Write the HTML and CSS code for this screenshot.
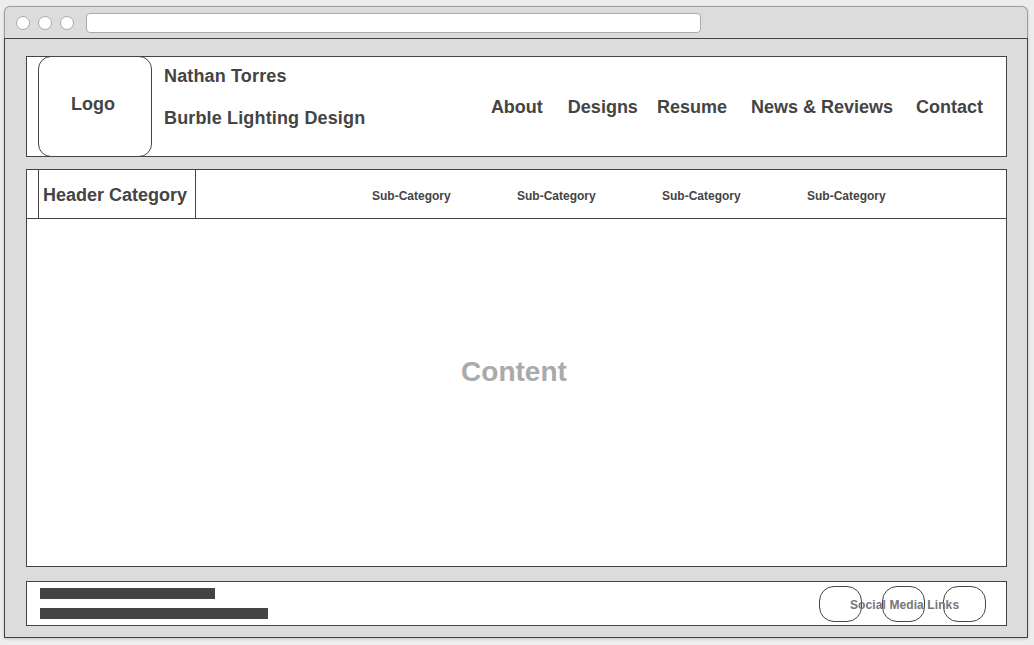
FILE: index.html
```html
<!DOCTYPE html>
<html lang="en">
<head>
<meta charset="utf-8">
<title>Wireframe</title>
<link rel="stylesheet" href="styles.css">
</head>
<body>
<div class="window">
  <div class="titlebar">
    <span class="dot"></span>
    <span class="dot"></span>
    <span class="dot"></span>
    <span class="urlbar"></span>
  </div>
  <div class="viewport">
    <header class="site-header">
      <div class="logo">Logo</div>
      <div class="brand">
        <div class="brand-line">Nathan Torres</div>
        <div class="brand-line">Burble Lighting Design</div>
      </div>
      <nav class="nav">
        <a class="nav-item">About</a>
        <a class="nav-item nav-designs">Designs</a>
        <a class="nav-item nav-resume">Resume</a>
        <a class="nav-item nav-news">News &amp; Reviews</a>
        <a class="nav-item nav-contact">Contact</a>
      </nav>
    </header>
    <section class="main">
      <div class="catbar">
        <div class="stub"></div>
        <div class="header-cat">Header Category</div>
        <div class="subcats">
          <span class="subcat">Sub-Category</span>
          <span class="subcat">Sub-Category</span>
          <span class="subcat">Sub-Category</span>
          <span class="subcat">Sub-Category</span>
        </div>
      </div>
      <div class="content">Content</div>
    </section>
    <footer class="site-footer">
      <div class="bars">
        <div class="bar bar-short"></div>
        <div class="bar bar-long"></div>
      </div>
      <div class="social">
        <span class="bubble"></span>
        <span class="bubble bubble-2"></span>
        <span class="bubble bubble-3"></span>
        <span class="social-label">Social Media Links</span>
      </div>
    </footer>
  </div>
</div>
</body>
</html>
```
FILE: styles.css
```css
* { box-sizing: border-box; }

html, body {
  margin: 0;
  padding: 0;
  background: #ededed;
}

body {
  font-family: "Liberation Sans", Arial, sans-serif;
  color: #444;
  width: 1034px;
  height: 645px;
  overflow: hidden;
}

.window {
  margin: 6px 0 0 4px;
  width: 1024px;
  box-shadow: 0 1px 3px rgba(0, 0, 0, 0.18);
  border-radius: 6px 6px 0 0;
}

.titlebar {
  height: 32px;
  background: #dcdcdc;
  border: 1px solid #9d9d9d;
  border-bottom: none;
  border-radius: 6px 6px 0 0;
  display: flex;
  align-items: center;
  padding-left: 11px;
}

.dot {
  width: 14px;
  height: 14px;
  border-radius: 50%;
  background: #fff;
  border: 1px solid #aaa;
  margin-right: 8px;
}

.urlbar {
  margin-left: 4px;
  width: 615px;
  height: 20px;
  background: #fff;
  border: 1px solid #aaa;
  border-radius: 4px;
}

.viewport {
  background: #dcdcdc;
  border: 1px solid #444;
  height: 600px;
  padding: 17px 20px 0 21px;
}

.site-header {
  height: 101px;
  background: #fff;
  border: 1px solid #444;
  display: flex;
  align-items: center;
  padding-right: 23px;
}

.logo {
  align-self: stretch;
  margin: -1px 0 -1px 11px;
  width: 114px;
  border: 1px solid #444;
  border-radius: 13px;
  display: flex;
  align-items: center;
  justify-content: center;
  font-weight: bold;
  font-size: 18px;
  padding: 0 4px 4px 0;
}

.brand {
  align-self: flex-start;
  margin-left: 12px;
  padding-top: 8px;
  display: flex;
  flex-direction: column;
  gap: 20px;
}

.brand-line {
  font-weight: bold;
  font-size: 18px;
  line-height: 22px;
  letter-spacing: 0.15px;
}

.nav {
  margin-left: auto;
  display: flex;
  align-items: center;
  padding-top: 2px;
}

.nav-item {
  font-weight: bold;
  font-size: 18px;
  color: #444;
}

.nav-designs { margin-left: 25px; }
.nav-resume { margin-left: 19px; }
.nav-news { margin-left: 24px; }
.nav-contact { margin-left: 23px; }

.main {
  margin-top: 12px;
  height: 398px;
  background: #fff;
  border: 1px solid #444;
  display: flex;
  flex-direction: column;
}

.catbar {
  height: 49px;
  border-bottom: 1px solid #444;
  display: flex;
  align-items: stretch;
}

.stub {
  width: 12px;
  border-right: 1px solid #444;
}

.header-cat {
  width: 157px;
  border-right: 1px solid #444;
  padding: 2px 0 0 4px;
  display: flex;
  align-items: center;
  font-weight: bold;
  font-size: 18px;
}

.subcats {
  display: flex;
  align-items: center;
  padding: 3px 0 0 176px;
}

.subcat {
  width: 145px;
  font-weight: bold;
  font-size: 12px;
}

.content {
  flex: 1;
  display: flex;
  align-items: center;
  justify-content: center;
  padding: 0 5px 42px 0;
  font-weight: bold;
  font-size: 28px;
  color: #aaa;
}

.site-footer {
  margin-top: 14px;
  height: 45px;
  background: #fff;
  border: 1px solid #444;
  display: flex;
  align-items: center;
  padding: 0 20px 0 13px;
}

.bars {
  display: flex;
  flex-direction: column;
  gap: 9px;
  align-self: flex-start;
  padding-top: 6px;
}

.bar {
  height: 11px;
  background: #444;
}

.bar-short { width: 175px; }
.bar-long { width: 228px; }

.social {
  margin-left: auto;
  position: relative;
  display: flex;
  align-items: center;
  padding-top: 1px;
}

.bubble {
  width: 43px;
  height: 36px;
  border: 1px solid #444;
  border-radius: 15px;
}

.bubble-2 { margin-left: 20px; }
.bubble-3 { margin-left: 18px; }

.social-label {
  position: absolute;
  left: 31px;
  top: 50%;
  transform: translateY(-40%);
  font-weight: bold;
  font-size: 12px;
  color: #777;
  white-space: nowrap;
  letter-spacing: 0.1px;
}
```
